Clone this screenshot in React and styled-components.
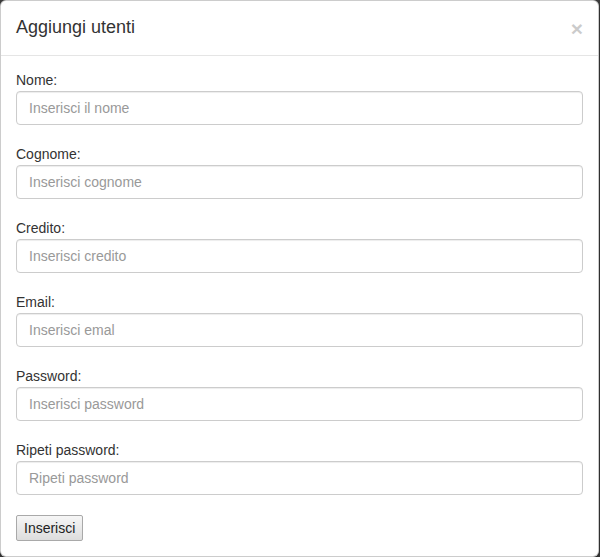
import React from "react";
import styled, { createGlobalStyle } from "styled-components";

const GlobalStyle = createGlobalStyle`
  html, body {
    margin: 0;
    padding: 0;
    background: #3f3f3f;
    font-family: "Liberation Sans", Arial, sans-serif;
    font-size: 14px;
    line-height: 1.42857;
    color: #333;
  }
  * {
    box-sizing: border-box;
  }
`;

const Modal = styled.div`
  width: 599px;
  background: #fff;
  border: 1px solid rgba(0, 0, 0, 0.2);
  border-radius: 6px;
  box-shadow: 0 3px 9px rgba(0, 0, 0, 0.5);
`;

const Header = styled.div`
  display: flex;
  align-items: flex-start;
  justify-content: space-between;
  padding: 14px 15px 15px;
  border-bottom: 1px solid #e5e5e5;
`;

const Title = styled.h4`
  margin: 0;
  font-size: 18px;
  font-weight: 500;
  line-height: 25px;
  color: #333;
`;

const Close = styled.button`
  margin-top: 3px;
  padding: 0;
  border: 0;
  background: transparent;
  font-family: "Liberation Sans", Arial, sans-serif;
  font-size: 21px;
  font-weight: bold;
  line-height: 1;
  color: #000;
  opacity: 0.2;
  text-shadow: 0 1px 0 #fff;
  cursor: pointer;
`;

const Body = styled.form`
  padding: 15px;
`;

const Group = styled.div`
  margin-bottom: 20px;
`;

const Label = styled.label`
  display: block;
  font-weight: normal;
  color: #333;
`;

const Input = styled.input`
  display: block;
  width: 100%;
  height: 34px;
  padding: 6px 12px;
  font-family: "Liberation Sans", Arial, sans-serif;
  font-size: 14px;
  color: #555;
  background: #fff;
  border: 1px solid #ccc;
  border-radius: 4px;
  box-shadow: inset 0 1px 1px rgba(0, 0, 0, 0.075);
  outline: none;

  &::placeholder {
    color: #999;
  }
`;

const Submit = styled.button`
  display: block;
  height: 26px;
  padding: 1px 7px;
  font-family: "Liberation Sans", Arial, sans-serif;
  font-size: 14px;
  color: #222;
  background: linear-gradient(#f6f6f6, #dddddd);
  border: 1px solid #a9a9a9;
  border-radius: 2px;
`;

const fields = [
  { label: "Nome:", placeholder: "Inserisci il nome", type: "text" },
  { label: "Cognome:", placeholder: "Inserisci cognome", type: "text" },
  { label: "Credito:", placeholder: "Inserisci credito", type: "text" },
  { label: "Email:", placeholder: "Inserisci emal", type: "email" },
  { label: "Password:", placeholder: "Inserisci password", type: "password" },
  { label: "Ripeti password:", placeholder: "Ripeti password", type: "password" },
];

function App() {
  return (
    <>
      <GlobalStyle />
      <Modal>
        <Header>
          <Title>Aggiungi utenti</Title>
          <Close type="button">&times;</Close>
        </Header>
        <Body onSubmit={(e) => e.preventDefault()}>
          {fields.map((f) => (
            <Group key={f.label}>
              <Label>{f.label}</Label>
              <Input type={f.type} placeholder={f.placeholder} />
            </Group>
          ))}
          <Submit type="submit">Inserisci</Submit>
        </Body>
      </Modal>
    </>
  );
}

export default App;
